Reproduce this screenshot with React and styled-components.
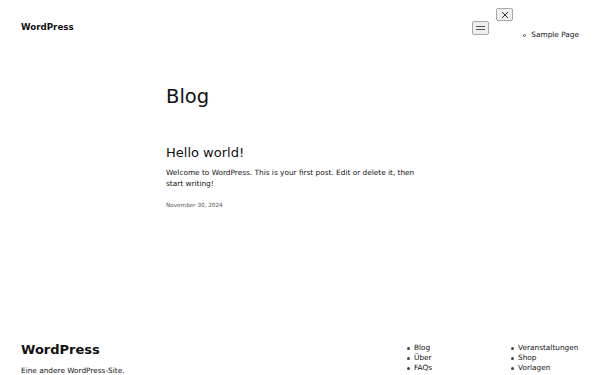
import React from "react";
import styled, { createGlobalStyle } from "styled-components";

const GlobalStyle = createGlobalStyle`
  html, body {
    margin: 0;
    padding: 0;
    background: #fff;
  }
  body {
    font-family: "DejaVu Sans", sans-serif;
    color: #111;
  }
`;

const Page = styled.div`
  width: 600px;
  height: 375px;
  display: flex;
  flex-direction: column;
  overflow: hidden;
`;

const Header = styled.header`
  display: flex;
  justify-content: space-between;
  align-items: flex-start;
  padding: 0 21px;
`;

const SiteTitle = styled.div`
  font-weight: bold;
  font-size: ${({ big }) => (big ? "13px" : "8.7px")};
  line-height: 1;
  margin-top: ${({ big }) => (big ? "0" : "23px")};
  color: #111;
`;

const Nav = styled.nav`
  display: flex;
  align-items: flex-start;
`;

const MenuButton = styled.button`
  box-sizing: border-box;
  width: 17px;
  height: 14px;
  margin-top: 21px;
  padding: 0;
  border: 1px solid #a8a8a8;
  border-radius: 2px;
  background: #efefef;
  display: flex;
  align-items: center;
  justify-content: center;
  color: #333;
`;

const CloseButton = styled(MenuButton)`
  height: 13px;
  margin-top: 8px;
  margin-left: 7px;
  background: #f0f0f0;
`;

const Overlay = styled.div`
  display: flex;
  flex-direction: column;
`;

const MenuList = styled.ul`
  margin: 9px 0 0;
  padding-left: 42px;
  list-style: none;
  font-size: 7.35px;
  line-height: 10px;
`;

const MenuItem = styled.li`
  position: relative;
  &::before {
    content: "";
    position: absolute;
    left: -8px;
    top: 4px;
    width: 3px;
    height: 3px;
    border: 1px solid #555;
    border-radius: 50%;
    box-sizing: border-box;
  }
`;

const Main = styled.main`
  padding-left: 166px;
  width: 264px;
`;

const PageTitle = styled.h1`
  margin: 45px 0 0;
  font-size: 19.5px;
  font-weight: normal;
  line-height: 1.2;
`;

const PostTitle = styled.h2`
  margin: 37px 0 0;
  font-size: 13px;
  font-weight: normal;
  line-height: 1.2;
`;

const Excerpt = styled.p`
  margin: 6px 0 0;
  font-size: 7.35px;
  line-height: 11px;
`;

const PostDate = styled.div`
  margin-top: 13px;
  font-size: 5.7px;
  color: #555;
`;

const Footer = styled.footer`
  margin-top: auto;
  margin-bottom: -1px;
  display: flex;
  align-items: flex-start;
  padding: 0 0 0 21px;
`;

const Brand = styled.div`
  flex: 1;
`;

const Tagline = styled.div`
  margin-top: 10px;
  font-size: 7.35px;
  line-height: 10px;
`;

const FooterList = styled.ul`
  margin: 0;
  padding-left: 7px;
  width: ${({ w }) => w}px;
  list-style: none;
  font-size: 7.35px;
  line-height: 10px;
`;

const FooterItem = styled.li`
  position: relative;
  &::before {
    content: "";
    position: absolute;
    left: -7px;
    top: 4px;
    width: 3px;
    height: 3px;
    border-radius: 50%;
    background: #444;
  }
`;

const Hamburger = () => (
  <svg width="9" height="5" viewBox="0 0 9 5">
    <rect x="0" y="0" width="9" height="1" fill="#555" />
    <rect x="0" y="3" width="9" height="1" fill="#555" />
  </svg>
);

const Cross = () => (
  <svg width="8" height="8" viewBox="0 0 8 8">
    <path d="M1 1 L7 7 M7 1 L1 7" stroke="#333" strokeWidth="1" />
  </svg>
);

export default function App() {
  return (
    <Page>
      <GlobalStyle />
      <Header>
        <SiteTitle>WordPress</SiteTitle>
        <Nav>
          <MenuButton aria-label="Menü öffnen">
            <Hamburger />
          </MenuButton>
          <Overlay>
            <CloseButton aria-label="Menü schließen">
              <Cross />
            </CloseButton>
            <MenuList>
              <MenuItem>Sample Page</MenuItem>
            </MenuList>
          </Overlay>
        </Nav>
      </Header>

      <Main>
        <PageTitle>Blog</PageTitle>
        <PostTitle>Hello world!</PostTitle>
        <Excerpt>
          Welcome to WordPress. This is your first post. Edit or delete it,
          then start writing!
        </Excerpt>
        <PostDate>November 30, 2024</PostDate>
      </Main>

      <Footer>
        <Brand>
          <SiteTitle big>WordPress</SiteTitle>
          <Tagline>Eine andere WordPress-Site.</Tagline>
        </Brand>
        <FooterList w={97}>
          <FooterItem>Blog</FooterItem>
          <FooterItem>Über</FooterItem>
          <FooterItem>FAQs</FooterItem>
        </FooterList>
        <FooterList w={82}>
          <FooterItem>Veranstaltungen</FooterItem>
          <FooterItem>Shop</FooterItem>
          <FooterItem>Vorlagen</FooterItem>
        </FooterList>
      </Footer>
    </Page>
  );
}
